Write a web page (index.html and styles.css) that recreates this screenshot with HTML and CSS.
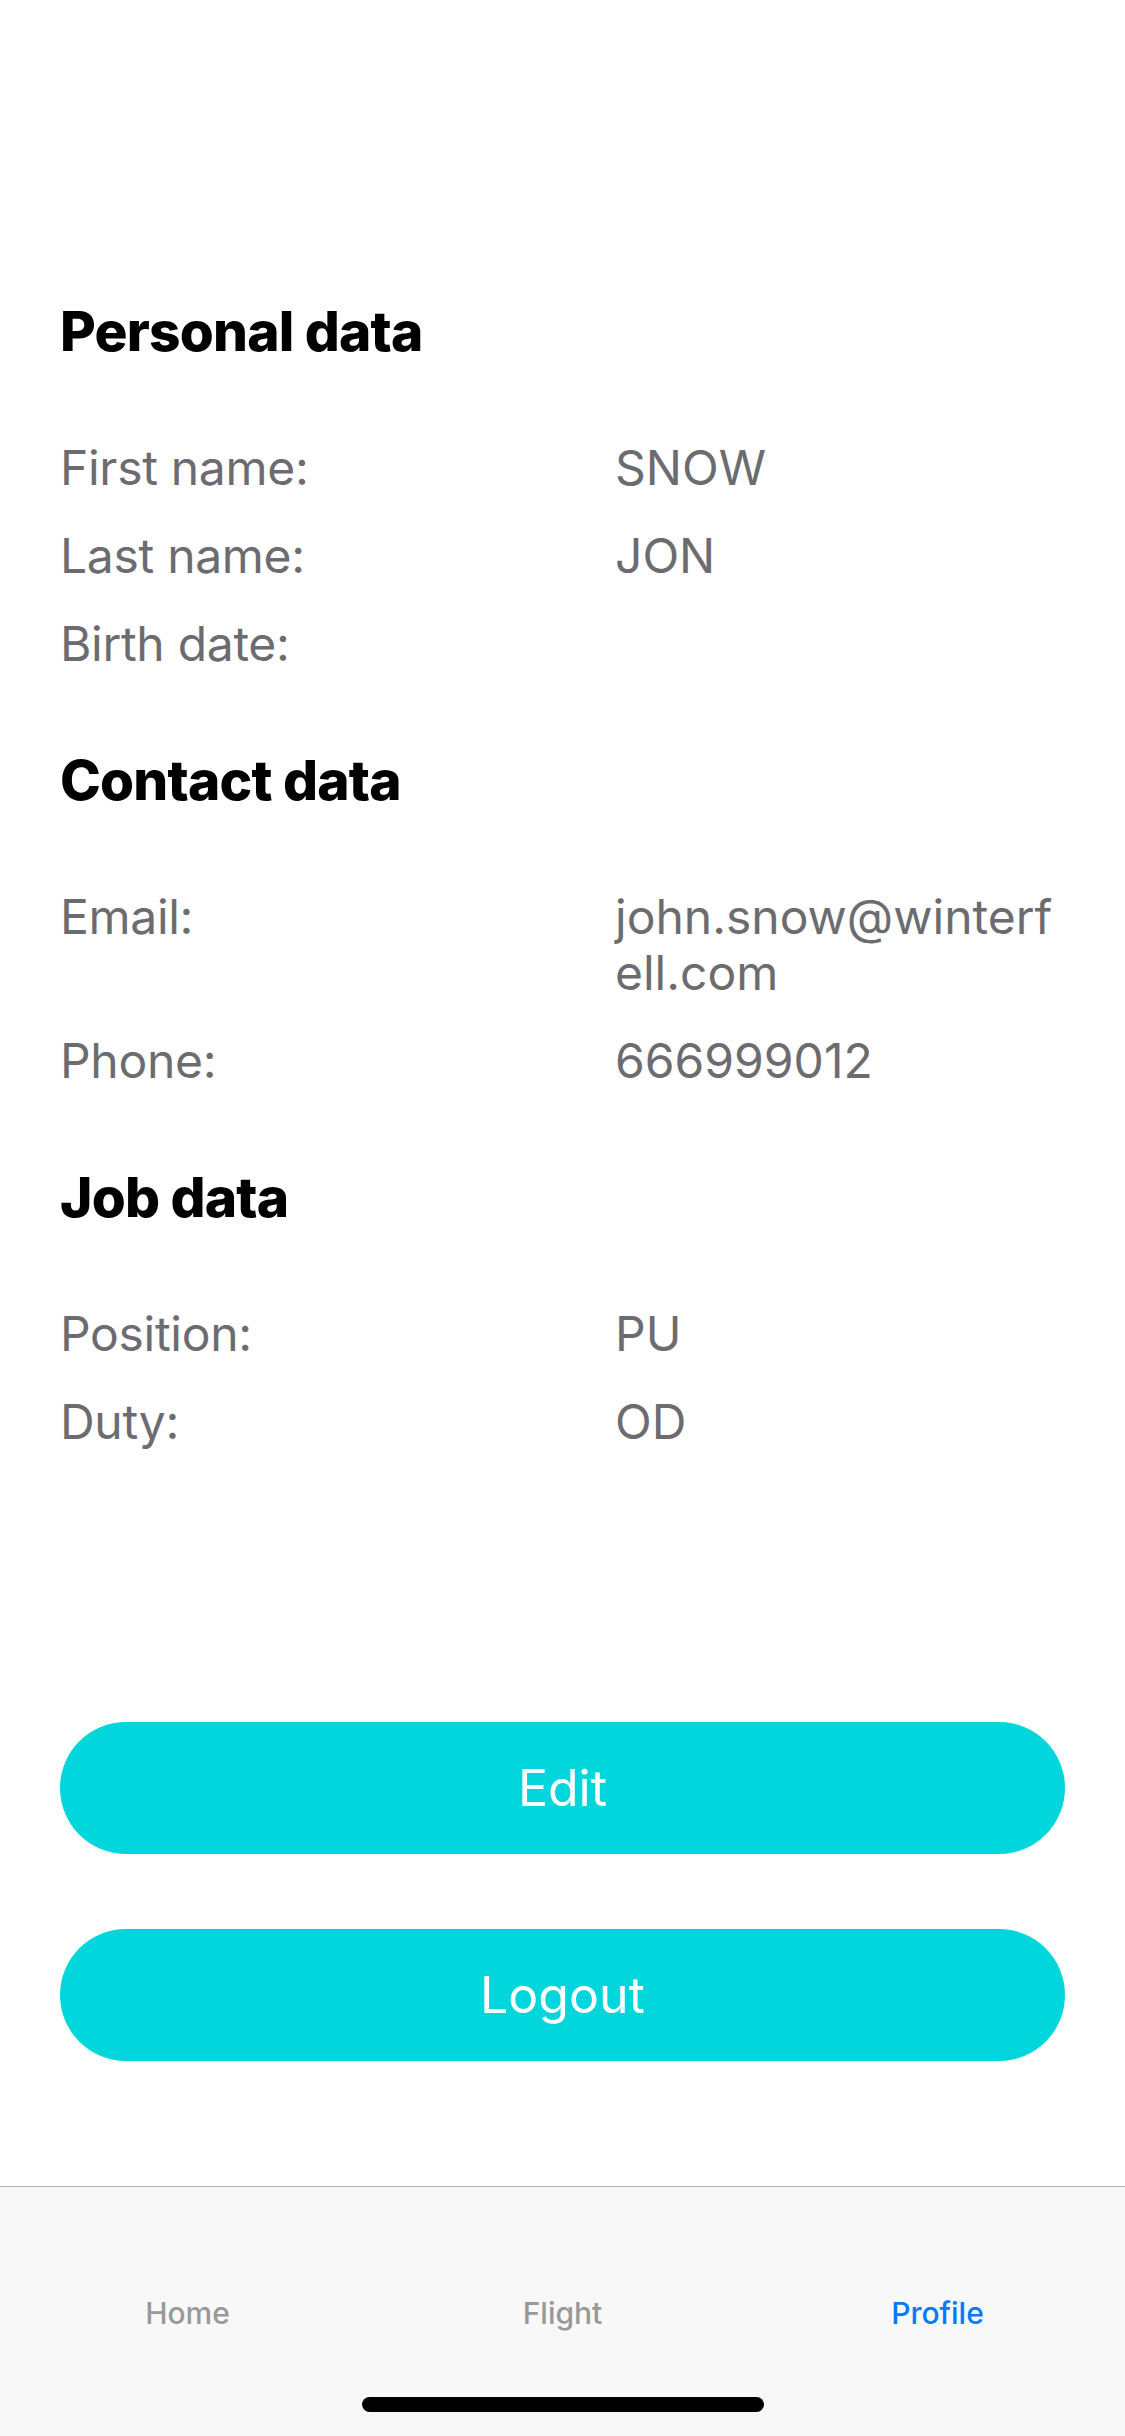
FILE: index.html
```html
<!DOCTYPE html>
<html lang="en">
<head>
<meta charset="utf-8">
<title>Profile</title>
<link rel="stylesheet" href="styles.css">
</head>
<body>
<div class="screen">
  <main class="content">
    <div class="sections">
      <section class="section">
        <h2 class="section-title">Personal data</h2>
        <div class="rows">
          <div class="row"><span class="label">First name:</span><span class="value">SNOW</span></div>
          <div class="row"><span class="label">Last name:</span><span class="value">JON</span></div>
          <div class="row"><span class="label">Birth date:</span><span class="value"></span></div>
        </div>
      </section>
      <section class="section">
        <h2 class="section-title">Contact data</h2>
        <div class="rows">
          <div class="row"><span class="label">Email:</span><span class="value">john.snow@winterf<wbr>ell.com</span></div>
          <div class="row"><span class="label">Phone:</span><span class="value">666999012</span></div>
        </div>
      </section>
      <section class="section">
        <h2 class="section-title">Job data</h2>
        <div class="rows">
          <div class="row"><span class="label">Position:</span><span class="value">PU</span></div>
          <div class="row"><span class="label">Duty:</span><span class="value">OD</span></div>
        </div>
      </section>
    </div>
    <div class="actions">
      <button class="btn" type="button">Edit</button>
      <button class="btn" type="button">Logout</button>
    </div>
  </main>
  <nav class="tabbar">
    <div class="tabs">
      <span class="tab">Home</span>
      <span class="tab">Flight</span>
      <span class="tab tab-active">Profile</span>
    </div>
    <div class="home-indicator"></div>
  </nav>
</div>
</body>
</html>
```

FILE: styles.css
```css
html, body {
  margin: 0;
  padding: 0;
  background: #ffffff;
}

body {
  font-family: "Inter", "Roboto", "Liberation Sans", sans-serif;
  -webkit-font-smoothing: antialiased;
}

.screen {
  width: 1125px;
  height: 2436px;
  display: flex;
  flex-direction: column;
  overflow: hidden;
}

.content {
  flex: 1;
  display: flex;
  flex-direction: column;
  padding: 298px 40px 0 60px;
}

.sections {
  display: flex;
  flex-direction: column;
  gap: 75px;
}

.section-title {
  margin: 0 0 76px;
  font-size: 55px;
  line-height: 66px;
  font-weight: 800;
  color: #000000;
  letter-spacing: -0.8px;
}

.rows {
  display: flex;
  flex-direction: column;
  gap: 32px;
}

.row {
  display: grid;
  grid-template-columns: 555px 1fr;
  font-size: 48px;
  line-height: 56px;
  color: #6c6c70;
}

.label {
  letter-spacing: -0.3px;
}

.value {
  overflow-wrap: anywhere;
}

.actions {
  margin-top: auto;
  display: flex;
  flex-direction: column;
  gap: 75px;
  padding: 0 20px 125px 0;
}

.btn {
  height: 132px;
  border: none;
  border-radius: 66px;
  background: #00d6db;
  color: #ffffff;
  font-family: "Inter", "Roboto", "Liberation Sans", sans-serif;
  font-size: 50px;
  font-weight: 400;
  padding: 0;
}

.tabbar {
  height: 250px;
  box-sizing: border-box;
  border-top: 1px solid #b4b4b4;
  background: #f8f8f8;
  display: flex;
  flex-direction: column;
  padding-top: 108px;
}

.tabs {
  display: grid;
  grid-template-columns: 1fr 1fr 1fr;
  height: 36px;
}

.tab {
  text-align: center;
  font-size: 30px;
  line-height: 36px;
  font-weight: 500;
  color: #999999;
}

.tab-active {
  color: #007aff;
}

.home-indicator {
  align-self: center;
  width: 402px;
  height: 15px;
  margin-top: 66px;
  border-radius: 8px;
  background: #000000;
}
```
